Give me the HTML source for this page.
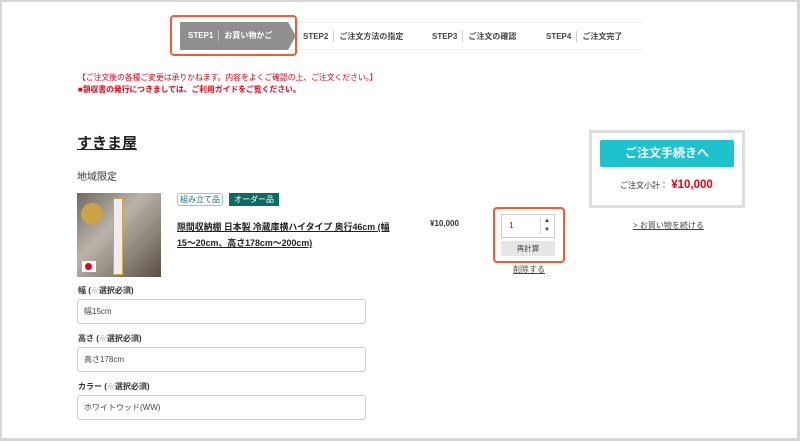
<!DOCTYPE html>
<html><head><meta charset="utf-8"><style>
*{margin:0;padding:0;box-sizing:border-box}
body{width:800px;height:441px;overflow:hidden;background:#fff;font-family:"Liberation Sans","Noto Sans CJK JP",sans-serif;color:#333;position:relative}
.frame{position:absolute;left:0;top:0;width:800px;height:441px;border:2px solid #d6d6d6;border-right-width:3px;border-bottom-width:3px}
.a{position:absolute;white-space:nowrap}
.stepbar{position:absolute;left:180px;top:22px;width:462px;height:28px;border-top:1px solid #eee;border-bottom:1px solid #eee}
.s1{position:absolute;left:180px;top:22px;width:108px;height:28px;background:#8f8f8f;color:#fff;font-size:8px;font-weight:bold;line-height:28px;padding-left:8px}
.arrow{position:absolute;left:288px;top:22px;width:0;height:0;border-top:14px solid transparent;border-bottom:14px solid transparent;border-left:8px solid #8f8f8f}
.st{font-size:8px;color:#444;font-weight:bold;top:31px}
.sep{display:inline-block;width:1px;height:11px;background:#ccc;vertical-align:middle;margin:0 5px}
.hl{position:absolute;border:2px solid #f15a35;border-radius:4px}
.red{color:#e60012;font-size:7.8px}
.inp{position:absolute;left:77px;width:289px;height:25px;border:1px solid #ccc;border-radius:3px;font-size:8px;padding-left:6px;line-height:23px;color:#444}
.lab{font-size:8px;font-weight:bold;color:#333}
</style></head><body>
<div class="frame"></div>
<div class="stepbar"></div>
<div class="s1">STEP1<span class="sep" style="background:#bbb"></span>お買い物かご</div>
<div class="arrow"></div>
<div class="hl" style="left:170px;top:15px;width:127px;height:41px"></div>
<div class="a st" style="left:303px">STEP2<span class="sep"></span>ご注文方法の指定</div>
<div class="a st" style="left:432px">STEP3<span class="sep"></span>ご注文の確認</div>
<div class="a st" style="left:546px">STEP4<span class="sep"></span>ご注文完了</div>

<div class="a red" style="left:78px;top:72px">【ご注文後の各種ご変更は承りかねます。内容をよくご確認の上、ご注文ください。】</div>
<div class="a red" style="left:78px;top:84px;font-weight:bold">■領収書の発行につきましては、ご利用ガイドをご覧ください。</div>

<div class="a" style="left:77px;top:132px;font-size:15px;font-weight:bold;text-decoration:underline;color:#222">すきま屋</div>
<div class="a" style="left:77px;top:168px;font-size:10px;color:#333">地域限定</div>

<div class="a" style="left:77px;top:193px;width:84px;height:84px;background:linear-gradient(135deg,#6f6a62,#b9b3aa 40%,#8a8378 70%,#5a4e42)">
 <div style="position:absolute;left:36px;top:5px;width:10px;height:77px;border:1px solid #d9a34a;background:#eee"></div>
 <div style="position:absolute;left:4px;top:10px;width:22px;height:22px;border-radius:50%;background:#c9a24a"></div>
 <div style="position:absolute;left:5px;top:68px;width:14px;height:11px;background:#fff"><div style="width:7px;height:7px;border-radius:50%;background:#e60012;margin:2px 3px"></div></div>
</div>

<div class="a" style="left:177px;top:193px;font-size:8px;color:#1a6d8a;border:1px solid #8cc;border-radius:3px;padding:0 2px;line-height:11px">組み立て品</div>
<div class="a" style="left:229px;top:193px;font-size:8px;color:#fff;background:#0f6a62;padding:0 5px;line-height:13px">オーダー品</div>
<div class="a" style="left:177px;top:219px;font-size:8.9px;font-weight:bold;line-height:16px;text-decoration:underline;color:#222">隙間収納棚 日本製 冷蔵庫横ハイタイプ 奥行46cm (幅<br>15〜20cm、高さ178cm〜200cm)</div>
<div class="a" style="left:430px;top:219px;font-size:8px;font-weight:bold;color:#333">¥10,000</div>

<div class="hl" style="left:493px;top:207px;width:72px;height:56px"></div>
<div class="a" style="left:501px;top:214px;width:54px;height:24px;border:1px solid #ccc;background:#fff;font-size:8px;line-height:22px;padding-left:7px">1<span style="position:absolute;left:38px;top:3px;width:1px;height:16px;background:#ddd"></span><span style="position:absolute;left:42px;top:-5px;font-size:6px">▲</span><span style="position:absolute;left:42px;top:4px;font-size:6px">▼</span></div>
<div class="a" style="left:501px;top:241px;width:54px;height:15px;background:#e6e6e6;font-size:7.5px;text-align:center;line-height:15px;color:#444">再計算</div>
<div class="a" style="left:513px;top:264px;font-size:8px;text-decoration:underline;color:#444">削除する</div>

<div class="a" style="left:589px;top:130px;width:156px;height:78px;border:3px solid #ddd"></div>
<div class="a" style="left:600px;top:140px;width:134px;height:27px;background:#1fc1cc;border-radius:2px;color:#fff;font-size:12px;font-weight:bold;text-align:center;line-height:27px">ご注文手続きへ</div>
<div class="a" style="left:620px;top:179px;font-size:8px;color:#333">ご注文小計：<span style="color:#e60012;font-size:11.5px;font-weight:bold"> ¥10,000</span></div>
<div class="a" style="left:633px;top:220px;font-size:8px;text-decoration:underline;color:#444">&gt; お買い物を続ける</div>

<div class="a lab" style="left:78px;top:285px">幅 (<span style="font-weight:normal;color:#999">※</span>選択必須)</div>
<div class="inp" style="top:299px">幅15cm</div>
<div class="a lab" style="left:78px;top:333px">高さ (<span style="font-weight:normal;color:#999">※</span>選択必須)</div>
<div class="inp" style="top:347px">高さ178cm</div>
<div class="a lab" style="left:78px;top:381px">カラー (<span style="font-weight:normal;color:#999">※</span>選択必須)</div>
<div class="inp" style="top:395px">ホワイトウッド(WW)</div>
</body></html>
